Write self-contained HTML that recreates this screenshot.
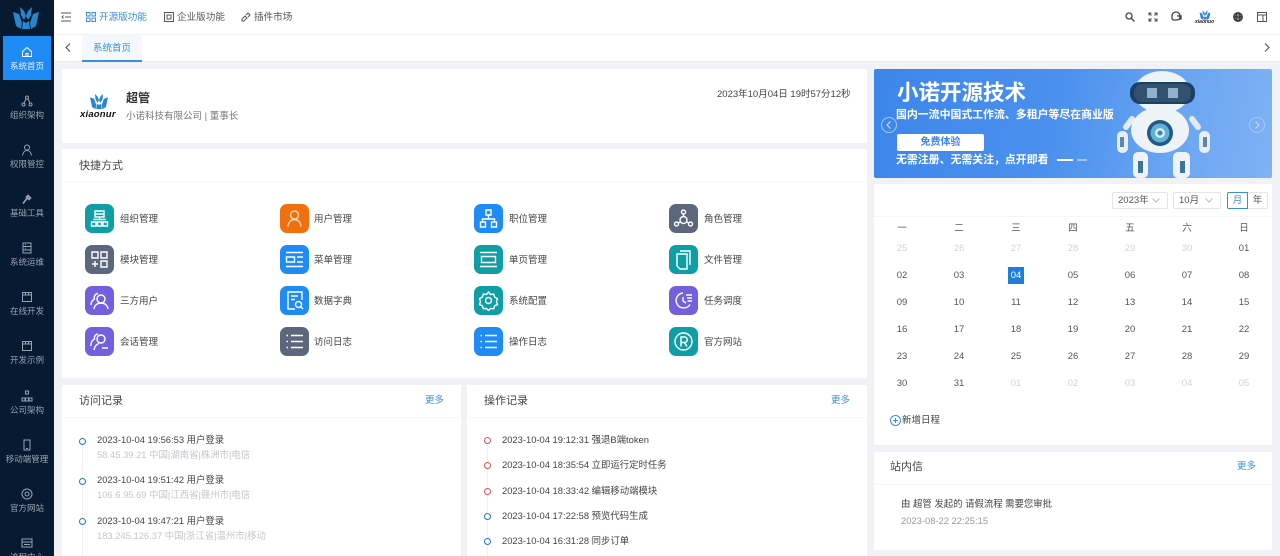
<!DOCTYPE html>
<html lang="zh-CN"><head><meta charset="utf-8"><title>系统首页</title>
<style>
*{box-sizing:border-box;margin:0;padding:0}
html,body{width:1280px;height:556px;overflow:hidden;background:#f0f2f6}
body{position:relative;font-family:"Liberation Sans","Noto Sans CJK SC",sans-serif;font-size:12px;color:#444}
.a{position:absolute;white-space:nowrap}
.card{position:absolute;background:#fff}
#side{position:absolute;left:0;top:0;width:54px;height:556px;background:#061a31;overflow:hidden}
.nav{position:absolute;left:3px;width:48px;height:44px;text-align:center;color:#98a4b3;font-size:8.5px;line-height:12px}
.nav svg{display:block;margin:10px auto 2px;width:12px;height:12px}
.nav.on{background:#1f8bf5;color:#e8f3ff}
.nav span{margin-left:-6px;margin-right:-6px;display:block;white-space:nowrap}
.ic{position:absolute;width:29px;height:29px;border-radius:7px}
.ic svg{position:absolute;left:4px;top:4px;width:21px;height:21px;fill:none;stroke:#fff;stroke-width:1.4}
.lb{position:absolute;font-size:9.5px;color:#444;white-space:nowrap;line-height:12px}
.ln{position:absolute;font-size:9.4px;color:#444;white-space:nowrap;line-height:12px}
.sub{position:absolute;font-size:9.4px;color:#c4c6ca;white-space:nowrap;line-height:12px}
.dot{position:absolute;width:7px;height:7px;border-radius:50%;border:1.5px solid #1f78c8;background:#fff}
.dot.r{border-color:#d9534f}
.vl{position:absolute;width:1px;background:#eef0f4}
.d{position:absolute;width:24px;margin-left:-12px;text-align:center;font-size:9.5px;line-height:12px;color:#555}
.d.o{color:#cfd2d7}
.t{position:absolute;color:#444;font-size:11px;line-height:14px;white-space:nowrap}
.top{position:absolute;top:11px;font-size:9.6px;line-height:14px;color:#555;white-space:nowrap}
.hl{position:absolute;height:1px;background:#f5f6f8}
</style></head><body>

<div style="position:absolute;left:54px;top:0;width:1226px;height:34px;background:#fff"></div>
<div style="position:absolute;left:54px;top:35px;width:1226px;height:26px;background:#fff"></div>
<div style="position:absolute;left:54px;top:61px;width:1226px;height:1px;background:#e8ebf0"></div>

<div id="side">
<svg class="a" style="left:13px;top:6px" width="26" height="24" viewBox="0 0 26 24"><g fill="#2a86cc"><path d="M0 6l6 2 3 9-1 6-5-3z"/><path d="M26 6l-6 2-3 9 1 6 5-3z"/><path d="M7 1l4 4 2 5-2 4-3-5z"/><path d="M19 1l-4 4-2 5 2 4 3-5z"/><path d="M10 15l3 2 3-2 1 8H9z"/></g></svg>
<div class="nav on" style="top:36px"><svg viewBox="0 0 12 12" fill="none" stroke="#fff"><path d="M1.5 5.5L6 1.5l4.500 4v5h-9zM5 10.500V7.500h2v3"/></svg><span>系统首页</span></div>
<div class="nav" style="top:85px"><svg viewBox="0 0 12 12" fill="none" stroke="#98a4b3"><circle cx="6" cy="2.500" r="1.500"/><circle cx="2.500" cy="9.500" r="1.500"/><circle cx="9.500" cy="9.500" r="1.500"/><path d="M5 4L3 8M7 4l2 4"/></svg><span>组织架构</span></div>
<div class="nav" style="top:134px"><svg viewBox="0 0 12 12" fill="none" stroke="#98a4b3"><circle cx="6" cy="3.500" r="2.500"/><path d="M1.500 11.500C2 8 4 6.500 6 6.500s4 1.500 4.500 5"/></svg><span>权限管控</span></div>
<div class="nav" style="top:183px"><svg viewBox="0 0 12 12" fill="none" stroke="#98a4b3" stroke-width="1.600"><path d="M2 10.500L7 4M7 2.500l2.500 2.500L8 6.500 5.500 4z"/></svg><span>基础工具</span></div>
<div class="nav" style="top:232px"><svg viewBox="0 0 12 12" fill="none" stroke="#98a4b3"><path d="M2 1h8v10H2zM2 4.500h8M2 8h8M4 2.800h1M4 6.200h1"/></svg><span>系统运维</span></div>
<div class="nav" style="top:281px"><svg viewBox="0 0 12 12" fill="none" stroke="#98a4b3"><path d="M1.500 1.500h9v9h-9zM1.500 4h9M4.500 1.500V4M7.500 1.500V4"/></svg><span>在线开发</span></div>
<div class="nav" style="top:330px"><svg viewBox="0 0 12 12" fill="none" stroke="#98a4b3"><path d="M1.500 1.500h9v9h-9zM1.500 4h9M4.500 1.500V4M7.500 1.500V4"/></svg><span>开发示例</span></div>
<div class="nav" style="top:380px"><svg viewBox="0 0 12 12" fill="none" stroke="#98a4b3"><path d="M4.500 1h3v3h-3zM1 8h3v3H1zM8 8h3v3H8zM4.500 8h3v3h-3z"/></svg><span>公司架构</span></div>
<div class="nav" style="top:429px"><svg viewBox="0 0 12 12" fill="none" stroke="#98a4b3"><path d="M3 1h6v10H3zM5 9.500h2"/></svg><span>移动端管理</span></div>
<div class="nav" style="top:478px"><svg viewBox="0 0 12 12" fill="none" stroke="#98a4b3"><circle cx="6" cy="6" r="5"/><circle cx="6" cy="6" r="2"/></svg><span>官方网站</span></div>
<div class="nav" style="top:527px"><svg viewBox="0 0 12 12" fill="none" stroke="#98a4b3"><path d="M1 2h10v8H1zM1 5h10M3 7.500h6"/></svg><span>流程中心</span></div>
</div>

<!-- top bar -->
<svg class="a" style="left:61px;top:12px" width="10" height="10" viewBox="0 0 10 10" fill="none" stroke="#555"><path d="M0 1h10M4 5h6M0 9h10M2.500 3.500L1 5l1.500 1.500"/></svg>
<svg class="a" style="left:86px;top:12px" width="10" height="10" viewBox="0 0 10 10" fill="none" stroke="#3a8ed8"><path d="M.5.500h3.500v3.500H.5zM6 .500h3.500v3.500H6zM.5 6h3.500v3.500H.5zM6 6h3.500v3.500H6z"/></svg>
<div class="top" style="left:99px;color:#3a8ed8">开源版功能</div>
<svg class="a" style="left:164px;top:12px" width="10" height="10" viewBox="0 0 10 10" fill="none" stroke="#555"><path d="M.5.500h9v9h-9zM3 3h4v4H3z"/></svg>
<div class="top" style="left:177px">企业版功能</div>
<svg class="a" style="left:241px;top:12px" width="10" height="10" viewBox="0 0 10 10" fill="none" stroke="#555"><path d="M1 7l3-3 2 2-3 3H1zM5 3l2-2 2 2-2 2"/></svg>
<div class="top" style="left:254px">插件市场</div>

<svg class="a" style="left:1125px;top:12px" width="10" height="10" viewBox="0 0 10 10" fill="none" stroke="#444" stroke-width="1.300"><circle cx="4" cy="4" r="3"/><path d="M6.300 6.300L9.500 9.500"/></svg>
<svg class="a" style="left:1148px;top:12px" width="10" height="10" viewBox="0 0 10 10" fill="none" stroke="#444"><path d="M1 3.500V1h2.500M6.500 1H9v2.500M9 6.500V9H6.500M3.500 9H1V6.500M1 1l2.500 2.500M9 1L6.500 3.500M9 9L6.500 6.500M1 9l2.500-2.500"/></svg>
<svg class="a" style="left:1171px;top:11px" width="11" height="11" viewBox="0 0 11 11" fill="none" stroke="#444" stroke-width="1.300"><path d="M1 5a4 4 0 018 0v1a3 3 0 01-3 3H3a2 2 0 01-2-2z"/><path d="M6 5h4v3H8"/></svg>
<svg class="a" style="left:1199px;top:10px" width="12" height="10" viewBox="0 0 26 24"><g fill="#2a86cc"><path d="M0 6l6 2 3 9-1 6-5-3z"/><path d="M26 6l-6 2-3 9 1 6 5-3z"/><path d="M7 1l4 4 2 5-2 4-3-5z"/><path d="M19 1l-4 4-2 5 2 4 3-5z"/><path d="M10 15l3 2 3-2 1 8H9z"/></g></svg>
<div class="a" style="left:1195px;top:19px;font-size:5px;line-height:6px;font-weight:bold;color:#222;font-style:italic">xiaonuo</div>
<svg class="a" style="left:1233px;top:12px" width="10" height="10" viewBox="0 0 10 10" fill="#888" stroke="#333" stroke-width="1.200"><circle cx="5" cy="5" r="4.300"/><ellipse cx="5" cy="5" rx="2" ry="4.300" fill="none"/><path d="M.5 5h9"/></svg>
<svg class="a" style="left:1257px;top:12px" width="10" height="10" viewBox="0 0 10 10" fill="none" stroke="#555"><path d="M.5.500h9v9h-9zM.5 3h9M6 3v6.500"/></svg>

<!-- tabs -->
<svg class="a" style="left:65px;top:43px" width="6" height="9" viewBox="0 0 6 9" fill="none" stroke="#555" stroke-width="1.200"><path d="M5 .5l-4 4 4 4"/></svg>
<div class="a" style="left:82px;top:35px;width:60px;height:27px;background:#f4f8fc;border-bottom:2px solid #3a8ed8;text-align:center;font-size:9.500px;line-height:28px;color:#3a8ed8">系统首页</div>
<svg class="a" style="left:1264px;top:43px" width="6" height="9" viewBox="0 0 6 9" fill="none" stroke="#555" stroke-width="1.200"><path d="M1 .5l4 4-4 4"/></svg>

<!-- profile -->
<div class="card" style="left:62px;top:69px;width:805px;height:74px"></div>
<svg class="a" style="left:90px;top:93px" width="18" height="17" viewBox="0 0 26 24"><g fill="#2a86cc"><path d="M0 6l6 2 3 9-1 6-5-3z"/><path d="M26 6l-6 2-3 9 1 6 5-3z"/><path d="M7 1l4 4 2 5-2 4-3-5z"/><path d="M19 1l-4 4-2 5 2 4 3-5z"/><path d="M10 15l3 2 3-2 1 8H9z"/></g></svg>
<div class="a" style="left:80px;top:110px;font-size:9.500px;line-height:10px;font-weight:bold;font-style:italic;color:#111;letter-spacing:.2px">xiaonur</div>
<div class="a" style="left:126px;top:90px;font-size:12px;line-height:16px;font-weight:bold;color:#333">超管</div>
<div class="a" style="left:126px;top:110px;font-size:9.500px;line-height:14px;color:#777">小诺科技有限公司 | 董事长</div>
<div class="a" style="left:717px;top:88px;font-size:9.500px;line-height:14px;color:#444">2023年10月04日 19时57分12秒</div>

<!-- shortcuts -->
<div class="card" style="left:62px;top:149px;width:805px;height:229px"></div>
<div class="hl" style="left:62px;top:181px;width:805px"></div>
<div class="t" style="left:79px;top:159px">快捷方式</div>

<div class="ic" style="left:85px;top:204px;background:#0f9ea6"><svg viewBox="0 0 21 21"><path d="M6 3h9v6H6zM6 6h9M10.500 9v2.500M4 11.500h13M2.500 14h4.500v4H2.500zM8.500 14H12.500v4h-4zM14 14h4.500v4H14z"/></svg></div>
<div class="lb" style="left:120px;top:214px">组织管理</div>
<div class="ic" style="left:280px;top:204px;background:#f26f0d"><svg viewBox="0 0 21 21" style="stroke:#ffd9b8"><circle cx="10.500" cy="7" r="4"/><path d="M4 18.500c.5-5 3.500-7 6.500-7s6 2 6.500 7"/></svg></div>
<div class="lb" style="left:314px;top:214px">用户管理</div>
<div class="ic" style="left:474px;top:204px;background:#1f8bf5"><svg viewBox="0 0 21 21"><path d="M8 2h5v5H8zM10.500 7v4M4.500 14v-3h12v3M2.500 14h5v5h-5zM13.500 14h5v5h-5z"/></svg></div>
<div class="lb" style="left:509px;top:214px">职位管理</div>
<div class="ic" style="left:669px;top:204px;background:#5c677d"><svg viewBox="0 0 21 21"><circle cx="10.500" cy="4" r="2"/><circle cx="3.500" cy="16" r="2"/><circle cx="17.500" cy="16" r="2"/><circle cx="10.500" cy="12" r="3.500"/><path d="M10.500 6v2.500M5.400 15l2.300-1.300M15.600 15l-2.300-1.300"/></svg></div>
<div class="lb" style="left:704px;top:214px">角色管理</div>

<div class="ic" style="left:85px;top:245px;background:#5c677d"><svg viewBox="0 0 21 21"><path d="M3 3h6v6H3zM12 3h6v6h-6zM12 12h6v6h-6zM6 12v6M3 15h6"/></svg></div>
<div class="lb" style="left:120px;top:255px">模块管理</div>
<div class="ic" style="left:280px;top:245px;background:#1f8bf5"><svg viewBox="0 0 21 21"><path d="M2 3.500h17M2 17.500h17M2.500 8h8v5h-8zM13 8h6M13 13h6"/></svg></div>
<div class="lb" style="left:314px;top:255px">菜单管理</div>
<div class="ic" style="left:474px;top:245px;background:#0f9ea6"><svg viewBox="0 0 21 21"><path d="M2 3.500h17M2 17.500h17M3.500 7.500h14v6h-14z"/></svg></div>
<div class="lb" style="left:509px;top:255px">单页管理</div>
<div class="ic" style="left:669px;top:245px;background:#0f9ea6"><svg viewBox="0 0 21 21"><path d="M7 2h10v14M4 5h10v15H7l-3-3z"/></svg></div>
<div class="lb" style="left:704px;top:255px">文件管理</div>

<div class="ic" style="left:85px;top:286px;background:#7460de"><svg viewBox="0 0 21 21"><circle cx="12" cy="9" r="4"/><path d="M5 19c.5-4 3.500-6 7-6s6.500 2 7 6M9 3.500A4 4 0 005.500 9 7 7 0 002 15"/></svg></div>
<div class="lb" style="left:120px;top:296px">三方用户</div>
<div class="ic" style="left:280px;top:286px;background:#1f8bf5"><svg viewBox="0 0 21 21"><path d="M18 10V2H4v17h7M7 6h7M7 9.500h4"/><circle cx="14.500" cy="14.500" r="3"/><path d="M16.700 16.700L19 19"/></svg></div>
<div class="lb" style="left:314px;top:296px">数据字典</div>
<div class="ic" style="left:474px;top:286px;background:#0f9ea6"><svg viewBox="0 0 21 21"><path d="M10.500 2l2 2.500 3.200-.400 1 3 2.800 1.600-1 3 1 3-2.800 1-1 3-3.200-.200-2 2-2-2-3.200.200-1-3-2.800-1 1-3-1-3 2.800-1.600 1-3 3.200.400z"/><circle cx="10.500" cy="10.500" r="3"/></svg></div>
<div class="lb" style="left:509px;top:296px">系统配置</div>
<div class="ic" style="left:669px;top:286px;background:#7460de"><svg viewBox="0 0 21 21"><path d="M17 14.500A7.500 7.500 0 1110 3M10 7v4l3 2M13 5h6M14 8h5M14.500 11H19"/></svg></div>
<div class="lb" style="left:704px;top:296px">任务调度</div>

<div class="ic" style="left:85px;top:327px;background:#7460de"><svg viewBox="0 0 21 21"><circle cx="12" cy="8" r="4"/><path d="M5 19c.5-4 3-6 5-6.500M13 17h6M9 3A4 4 0 005.500 8 7 7 0 002 15"/></svg></div>
<div class="lb" style="left:120px;top:337px">会话管理</div>
<div class="ic" style="left:280px;top:327px;background:#5c677d"><svg viewBox="0 0 21 21"><path d="M7 4.500h12M7 10.500h12M7 16.500h12M2.500 4.500h1.500M2.500 10.500h1.500M2.500 16.500h1.500"/></svg></div>
<div class="lb" style="left:314px;top:337px">访问日志</div>
<div class="ic" style="left:474px;top:327px;background:#1f8bf5"><svg viewBox="0 0 21 21"><path d="M7 4.500h12M7 10.500h12M7 16.500h12M2.500 4.500h1.500M2.500 10.500h1.500M2.500 16.500h1.500"/></svg></div>
<div class="lb" style="left:509px;top:337px">操作日志</div>
<div class="ic" style="left:669px;top:327px;background:#0f9ea6"><svg viewBox="0 0 21 21"><circle cx="10.500" cy="10.500" r="8.500"/><path d="M8 15.500V6h3.500a2.500 2.500 0 010 5.500H8M11.500 11.500l2.500 4"/></svg></div>
<div class="lb" style="left:704px;top:337px">官方网站</div>

<!-- visit log -->
<div class="card" style="left:62px;top:385px;width:399px;height:171px"></div>
<div class="hl" style="left:62px;top:417px;width:399px"></div>
<div class="t" style="left:79px;top:394px">访问记录</div>
<div class="lb" style="left:425px;top:395px;color:#3a8ed8">更多</div>
<div class="vl" style="left:82px;top:445px;height:111px"></div>
<div class="dot" style="left:79px;top:438px"></div>
<div class="ln" style="left:97px;top:434px">2023-10-04 19:56:53 用户登录</div>
<div class="sub" style="left:97px;top:449px">58.45.39.21 中国|湖南省|株洲市|电信</div>
<div class="dot" style="left:79px;top:478px"></div>
<div class="ln" style="left:97px;top:474px">2023-10-04 19:51:42 用户登录</div>
<div class="sub" style="left:97px;top:489px">106.6.95.69 中国|江西省|赣州市|电信</div>
<div class="dot" style="left:79px;top:518px"></div>
<div class="ln" style="left:97px;top:515px">2023-10-04 19:47:21 用户登录</div>
<div class="sub" style="left:97px;top:530px">183.245.126.37 中国|浙江省|温州市|移动</div>

<!-- op log -->
<div class="card" style="left:467px;top:385px;width:400px;height:171px"></div>
<div class="hl" style="left:467px;top:417px;width:400px"></div>
<div class="t" style="left:484px;top:394px">操作记录</div>
<div class="lb" style="left:831px;top:395px;color:#3a8ed8">更多</div>
<div class="vl" style="left:487px;top:445px;height:111px"></div>
<div class="dot r" style="left:484px;top:437px"></div>
<div class="ln" style="left:502px;top:434px">2023-10-04 19:12:31 强退B端token</div>
<div class="dot r" style="left:484px;top:462px"></div>
<div class="ln" style="left:502px;top:459px">2023-10-04 18:35:54 立即运行定时任务</div>
<div class="dot r" style="left:484px;top:488px"></div>
<div class="ln" style="left:502px;top:485px">2023-10-04 18:33:42 编辑移动端模块</div>
<div class="dot" style="left:484px;top:513px"></div>
<div class="ln" style="left:502px;top:510px">2023-10-04 17:22:58 预览代码生成</div>
<div class="dot" style="left:484px;top:538px"></div>
<div class="ln" style="left:502px;top:535px">2023-10-04 16:31:28 同步订单</div>

<!-- banner -->
<div class="a" style="left:874px;top:69px;width:398px;height:109px;border-radius:2px;overflow:hidden;background:linear-gradient(100deg,#3d86ea 0%,#4a90ee 45%,#6aa5f2 75%,#7fb2f4 100%)">
<div class="a" style="left:23px;top:11px;font-size:21.500px;line-height:26px;font-weight:bold;color:#fff">小诺开源技术</div>
<div class="a" style="left:22px;top:39px;font-size:10.900px;line-height:14px;font-weight:bold;color:#fff">国内一流中国式工作流、多租户等尽在商业版</div>
<div class="a" style="left:23px;top:65px;width:87px;height:17px;background:#fff;border-radius:2px;text-align:center;font-size:10px;line-height:17px;font-weight:bold;color:#3d86ea">免费体验</div>
<div class="a" style="left:22px;top:84px;font-size:10.900px;line-height:14px;font-weight:bold;color:#fff">无需注册、无需关注，点开即看</div>
<div class="a" style="left:183px;top:90px;width:16px;height:2px;background:#fff"></div>
<div class="a" style="left:203px;top:90px;width:10px;height:2px;background:#9cc3f6"></div>
<div class="a" style="left:7px;top:48px;width:16px;height:16px;border:1px solid #a8c8f6;border-radius:50%"></div>
<svg class="a" style="left:12px;top:52px" width="5" height="8" viewBox="0 0 5 8" fill="none" stroke="#cfe0fa"><path d="M4.500.5L1 4l3.500 3.500"/></svg>
<div class="a" style="left:375px;top:48px;width:16px;height:16px;border:1px solid #a8c8f6;border-radius:50%"></div>
<svg class="a" style="left:381px;top:52px" width="5" height="8" viewBox="0 0 5 8" fill="none" stroke="#cfe0fa"><path d="M.5.500L4 4 .5 7.500"/></svg>
<!-- robot -->
<svg class="a" style="left:240px;top:0" width="100" height="109" viewBox="0 0 100 109">
<ellipse cx="48" cy="23" rx="28" ry="21" fill="#eef3f8"/>
<rect x="16" y="13" width="65" height="22" rx="10" fill="#1c3f66"/>
<rect x="20" y="15" width="57" height="18" rx="8" fill="#33506f"/>
<rect x="33" y="19" width="10" height="10" fill="#8fb0cf"/><rect x="54" y="19" width="10" height="10" fill="#8fb0cf"/>
<ellipse cx="46" cy="61" rx="29" ry="23" fill="#eef3f8"/>
<circle cx="46" cy="64" r="13" fill="#1f5a85"/><circle cx="46" cy="64" r="9.500" fill="#62b0d8"/><circle cx="46" cy="64" r="5" fill="#d8ecf6"/><circle cx="46" cy="64" r="2.500" fill="#3c86b4"/>
<path d="M18 50L12 58" stroke="#e4eaf2" stroke-width="6" stroke-linecap="round"/>
<path d="M78 50l6 8" stroke="#e4eaf2" stroke-width="6" stroke-linecap="round"/>
<rect x="3" y="62" width="11" height="22" rx="5" fill="#e8eef5"/><rect x="85" y="62" width="11" height="22" rx="5" fill="#e8eef5"/>
<rect x="6" y="68" width="4" height="10" fill="#5f88a8"/><rect x="89" y="68" width="4" height="10" fill="#5f88a8"/>
<rect x="19" y="83" width="15" height="26" rx="5" fill="#eef3f8"/><rect x="59" y="83" width="17" height="26" rx="5" fill="#eef3f8"/>
<rect x="24" y="92" width="5" height="12" fill="#3f7397"/><rect x="66" y="92" width="5" height="12" fill="#3f7397"/>
</svg>
</div>

<!-- calendar -->
<div class="card" style="left:874px;top:184px;width:398px;height:261px"></div>
<div class="hl" style="left:874px;top:216px;width:398px"></div>
<div class="a" style="left:1112px;top:192px;width:56px;height:17px;border:1px solid #e3e5e9;border-radius:2px;font-size:9.500px;line-height:15px;padding-left:5px;color:#555">2023年</div>
<svg class="a" style="left:1152px;top:198px" width="8" height="5" viewBox="0 0 8 5" fill="none" stroke="#bbb"><path d="M.5.500L4 4 7.500.500"/></svg>
<div class="a" style="left:1173px;top:192px;width:48px;height:17px;border:1px solid #e3e5e9;border-radius:2px;font-size:9.500px;line-height:15px;padding-left:5px;color:#555">10月</div>
<svg class="a" style="left:1205px;top:198px" width="8" height="5" viewBox="0 0 8 5" fill="none" stroke="#bbb"><path d="M.5.500L4 4 7.500.500"/></svg>
<div class="a" style="left:1227px;top:192px;width:21px;height:17px;border:1px solid #3a8ed8;border-radius:2px 0 0 2px;font-size:9.500px;line-height:15px;text-align:center;color:#3a8ed8">月</div>
<div class="a" style="left:1248px;top:192px;width:20px;height:17px;border:1px solid #e3e5e9;border-left:0;border-radius:0 2px 2px 0;font-size:9.500px;line-height:15px;text-align:center;color:#555">年</div>

<div class="d" style="left:902px;top:223px">一</div><div class="d" style="left:959px;top:223px">二</div><div class="d" style="left:1016px;top:223px">三</div><div class="d" style="left:1073px;top:223px">四</div><div class="d" style="left:1130px;top:223px">五</div><div class="d" style="left:1187px;top:223px">六</div><div class="d" style="left:1244px;top:223px">日</div>
<div class="d o" style="left:902px;top:243px">25</div><div class="d o" style="left:959px;top:243px">26</div><div class="d o" style="left:1016px;top:243px">27</div><div class="d o" style="left:1073px;top:243px">28</div><div class="d o" style="left:1130px;top:243px">29</div><div class="d o" style="left:1187px;top:243px">30</div><div class="d" style="left:1244px;top:243px">01</div>
<div class="d" style="left:902px;top:270px">02</div><div class="d" style="left:959px;top:270px">03</div>
<div class="a" style="left:1008px;top:267px;width:16px;height:17px;background:#1f7fd8"></div>
<div class="d" style="left:1016px;top:270px;color:#fff">04</div><div class="d" style="left:1073px;top:270px">05</div><div class="d" style="left:1130px;top:270px">06</div><div class="d" style="left:1187px;top:270px">07</div><div class="d" style="left:1244px;top:270px">08</div>
<div class="d" style="left:902px;top:297px">09</div><div class="d" style="left:959px;top:297px">10</div><div class="d" style="left:1016px;top:297px">11</div><div class="d" style="left:1073px;top:297px">12</div><div class="d" style="left:1130px;top:297px">13</div><div class="d" style="left:1187px;top:297px">14</div><div class="d" style="left:1244px;top:297px">15</div>
<div class="d" style="left:902px;top:324px">16</div><div class="d" style="left:959px;top:324px">17</div><div class="d" style="left:1016px;top:324px">18</div><div class="d" style="left:1073px;top:324px">19</div><div class="d" style="left:1130px;top:324px">20</div><div class="d" style="left:1187px;top:324px">21</div><div class="d" style="left:1244px;top:324px">22</div>
<div class="d" style="left:902px;top:351px">23</div><div class="d" style="left:959px;top:351px">24</div><div class="d" style="left:1016px;top:351px">25</div><div class="d" style="left:1073px;top:351px">26</div><div class="d" style="left:1130px;top:351px">27</div><div class="d" style="left:1187px;top:351px">28</div><div class="d" style="left:1244px;top:351px">29</div>
<div class="d" style="left:902px;top:378px">30</div><div class="d" style="left:959px;top:378px">31</div><div class="d o" style="left:1016px;top:378px">01</div><div class="d o" style="left:1073px;top:378px">02</div><div class="d o" style="left:1130px;top:378px">03</div><div class="d o" style="left:1187px;top:378px">04</div><div class="d o" style="left:1244px;top:378px">05</div>

<svg class="a" style="left:890px;top:415px" width="11" height="11" viewBox="0 0 11 11" fill="none" stroke="#3a8ed8"><circle cx="5.500" cy="5.500" r="5"/><path d="M5.500 3v5M3 5.500h5"/></svg>
<div class="lb" style="left:902px;top:415px">新增日程</div>

<!-- messages -->
<div class="card" style="left:874px;top:452px;width:398px;height:98px"></div>
<div class="hl" style="left:874px;top:484px;width:398px"></div>
<div class="t" style="left:890px;top:460px">站内信</div>
<div class="lb" style="left:1237px;top:461px;color:#3a8ed8">更多</div>
<div class="lb" style="left:901px;top:498px;font-size:9.400px">由 超管 发起的 请假流程 需要您审批</div>
<div class="sub" style="left:901px;top:515px;color:#999">2023-08-22 22:25:15</div>
</body></html>
